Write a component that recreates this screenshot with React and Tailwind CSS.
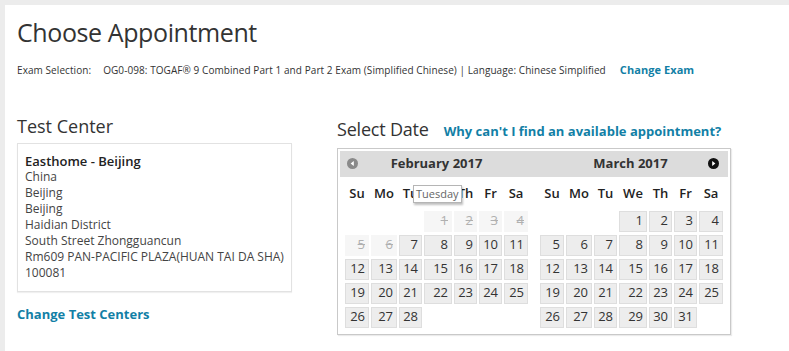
import React from 'react';

const COLS = 'grid grid-cols-[24px_26px_23px_28px_23px_23px_24px] gap-x-[2px]';
const DAYS = ['Su', 'Mo', 'Tu', 'We', 'Th', 'Fr', 'Sa'];

function buildMonth(startDay, total, disabledUpTo) {
  const cells = [];
  for (let i = 0; i < startDay; i++) cells.push(null);
  for (let d = 1; d <= total; d++) cells.push({ d, off: d <= disabledUpTo });
  return cells;
}

function NavIcon({ dir }) {
  const prev = dir === 'prev';
  return (
    <svg width="11" height="11" viewBox="0 0 11 11">
      <circle cx="5.5" cy="5.5" r="5.5" fill={prev ? '#8a8a8a' : '#111'} />
      {prev ? (
        <polygon points="6.8,3 3.6,5.5 6.8,8" fill="#fff" />
      ) : (
        <polygon points="4.2,3 7.4,5.5 4.2,8" fill="#fff" />
      )}
    </svg>
  );
}

function Month({ title, cells, nav, className }) {
  return (
    <div className={className}>
      <div className="relative flex h-[26px] items-center justify-center bg-[#dcdcdc] text-[13px] font-bold text-[#333]">
        {nav === 'prev' && (
          <span className="absolute left-[7px] top-[7px] flex">
            <NavIcon dir="prev" />
          </span>
        )}
        {title}
        {nav === 'next' && (
          <span className="absolute right-[9px] top-[7px] flex">
            <NavIcon dir="next" />
          </span>
        )}
      </div>
      <div className={nav === 'prev' ? 'pl-[5px]' : 'pl-[7px]'}>
        <div className={`${COLS} mt-[6px] h-[22px] items-center text-[13px] font-semibold text-[#222]`}>
          {DAYS.map((d) => (
            <div key={d} className="text-center">
              {d}
            </div>
          ))}
        </div>
        <div className={`${COLS} mt-[6px] auto-rows-[21px] gap-y-[3px] text-[13px]`}>
          {cells.map((c, i) =>
            c === null ? (
              <div key={i} />
            ) : c.off ? (
              <div
                key={i}
                className="flex items-center justify-end bg-[#f6f6f6] pr-[4px] text-[#b0b0b0] line-through"
              >
                {c.d}
              </div>
            ) : (
              <div
                key={i}
                className="flex items-center justify-end border border-[#dedede] bg-[#ededed] pr-[3px] text-[#333]"
              >
                {c.d}
              </div>
            )
          )}
        </div>
      </div>
    </div>
  );
}

export default function App() {
  const feb = buildMonth(3, 28, 6);
  const mar = buildMonth(3, 31, 0);

  return (
    <div className="min-h-screen bg-[#ececec] pl-[5px] pt-[5px] font-['Open_Sans',sans-serif] text-[#333]">
      <div className="min-h-[346px] bg-white pl-[12px]">
        <h1 className="pt-[11px] text-[25px] leading-[32px] tracking-[-0.4px] text-[#333]">
          Choose Appointment
        </h1>
        <div className="mt-[15px] flex text-[10px] leading-[14px] tracking-[0.07px] text-[#333]">
          <span className="mr-[12px]">Exam Selection:</span>
          <span>
            OG0-098: TOGAF® 9 Combined Part 1 and Part 2 Exam (Simplified Chinese) | Language: Chinese
            Simplified
          </span>
          <a className="ml-[14px] text-[11px] font-bold text-[#127fa6]">Change Exam</a>
        </div>

        <div className="mt-[37px] flex">
          <div className="w-[275px]">
            <h2 className="text-[18px] leading-[24px] text-[#333]">Test Center</h2>
            <div className="mt-[5px] border border-[#e2e2e2] px-[7px] pb-[10px] pt-[9px] text-[12px] leading-[16px] text-[#444] shadow-[0_1px_1px_rgba(0,0,0,0.06)]">
              <div className="text-[13px] font-semibold leading-[16px] text-[#222]">Easthome - Beijing</div>
              <div>China</div>
              <div>Beijing</div>
              <div>Beijing</div>
              <div>Haidian District</div>
              <div>South Street Zhongguancun</div>
              <div>Rm609 PAN-PACIFIC PLAZA(HUAN TAI DA SHA)</div>
              <div>100081</div>
            </div>
            <a className="mt-[13px] block text-[13px] font-bold leading-[18px] text-[#127fa6]">
              Change Test Centers
            </a>
          </div>

          <div className="ml-[45px] pt-[3px]">
            <div className="flex items-baseline gap-[15px]">
              <h2 className="text-[18px] leading-[24px] tracking-[-0.2px] text-[#333]">Select Date</h2>
              <a className="text-[13px] font-bold text-[#127fa6]">
                Why can't I find an available appointment?
              </a>
            </div>
            <div className="relative mt-[6px] flex w-[394px] border border-[#c9c9c9] p-[2px] pb-[6px] shadow-[1px_1px_1px_rgba(0,0,0,0.08)]">
              <Month className="w-[193px]" title="February 2017" cells={feb} nav="prev" />
              <Month className="w-[195px]" title="March 2017" cells={mar} nav="next" />
              <div className="absolute left-[75px] top-[36px] border border-[#b5b5b5] bg-white px-[2px] text-[11px] leading-[16px] text-[#666] shadow-[1px_2px_2px_rgba(0,0,0,0.25)]">
                Tuesday
              </div>
            </div>
          </div>
        </div>
      </div>
    </div>
  );
}
